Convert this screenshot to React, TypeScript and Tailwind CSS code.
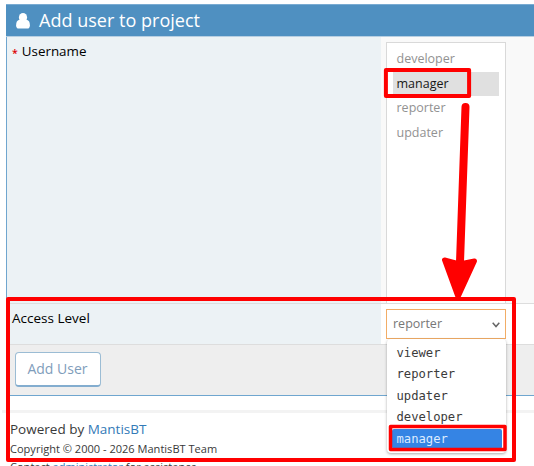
const roles = ['developer', 'manager', 'reporter', 'updater'];
const levels = ['viewer', 'reporter', 'updater', 'developer', 'manager'];

function UserIcon() {
  return (
    <svg className="ml-[10px] h-[16px] w-[14px]" viewBox="0 0 14 16" fill="#fff">
      <ellipse cx="7" cy="4.400" rx="4.100" ry="4.400" />
      <path d="M3.300 6.800C1.100 7.200.1 9.500.1 12.400c0 1.900 1 3.200 2.600 3.200h8.600c1.600 0 2.600-1.300 2.600-3.200 0-2.900-1-5.200-3.200-5.600z" />
    </svg>
  );
}

function UserForm() {
  return (
    <section className="ml-[6px] mt-[4px] h-[392px] border-b border-l border-[#6fa6cf]">
      <h4 className="-ml-px flex h-[33px] items-center border-b border-t border-b-[#b7cfe2] border-t-[#79abd2] bg-[#4f90c1] text-[18px] text-white">
        <UserIcon />
        <span className="ml-[9px] tracking-[0.02px]">Add user to project</span>
      </h4>
      <div className="flex h-[266px]">
        <div className="flex w-[374px] gap-[4px] bg-[#ecf2f5] pl-[5px] pt-[4px] text-[13.4px] leading-[20px] text-black">
          <span className="pt-[2px] text-[10.500px] font-semibold text-[#d00]">*</span>
          <span>Username</span>
        </div>
        <div className="flex-1 bg-[#f9f9f9] pl-[5px] pt-[5px]">
          <ul className="h-[261px] w-[120px] border border-b-0 border-[#d9d9d9] bg-white px-[6px] pt-[4px] text-[12.5px] text-[#929292]">
            {roles.map((role) => (
              <li key={role} className={role === 'manager' ? 'h-[24.600px] bg-[#e0e0e0] pl-[3.500px] leading-[23.500px] text-[#161616]' : 'h-[24.600px] pl-[3.500px] leading-[23.500px]'}>
                {role}
              </li>
            ))}
          </ul>
        </div>
      </div>
      <div className="flex h-[41px] border-t border-[#ddd]">
        <div className="w-[374px] bg-[#ecf2f5] pl-[5px] pt-[4px] text-[13.500px] leading-[20px] text-black">Access Level</div>
        <div className="flex-1 bg-white pl-[5px] pt-[5px]">
          <div className="flex h-[30px] w-[120px] items-center justify-between border border-[#f2ad66] pl-[6px] pr-[5px] text-[12.5px] text-[#777]">
            reporter
            <svg className="mt-px h-[6px] w-[8px]" viewBox="0 0 8 6" fill="none" stroke="#666" strokeWidth="1.500">
              <path d="M.7.800 4 4.500 7.300.800" />
            </svg>
          </div>
        </div>
      </div>
      <div className="h-[51px] border-t border-[#ddd] bg-[#eee] pl-[7px] pt-[7px]">
        <button className="ml-[0.500px] flex h-[35px] w-[86px] items-center justify-center rounded-[4px] border border-b-2 border-[#9bbcd4] border-b-[#83adcf] bg-white pb-px text-[14px] text-[#7f9dbb]">Add User</button>
      </div>
    </section>
  );
}

function LevelMenu() {
  return (
    <ul className="absolute left-[387px] top-[339px] h-[114px] w-[119px] rounded-[4px] bg-white pt-[4px] font-['DejaVu_Sans_Mono',monospace] text-[12.2px] leading-[21.4px] text-[#3b3b3b] shadow-[0_1px_3px_#0005]">
      {levels.map((level) => (
        <li key={level} className={level === 'manager' ? 'ml-[5px] mr-[4px] h-[20px] rounded-[2px] bg-[#3584e4] pl-[4.500px] text-[#dcebff]' : 'h-[21.400px] pl-[9.500px]'}>
          {level}
        </li>
      ))}
    </ul>
  );
}

function Annotations() {
  return (
    <svg className="absolute left-0 top-0 h-[466px] w-[534px]" viewBox="0 0 534 466" fill="none" stroke="#f00" strokeLinejoin="round">
      <rect x="385.900" y="69.900" width="83.200" height="26.200" strokeWidth="4" />
      <path d="M465.500 107 460 262" strokeWidth="8" strokeLinecap="round" />
      <path d="m444.500 260 15 4 15-3-16.500 36z" fill="#f00" strokeWidth="5" />
      <rect x="8" y="299" width="506" height="161" strokeWidth="4" />
      <rect x="390.500" y="426.500" width="114.500" height="23" strokeWidth="3.500" />
    </svg>
  );
}

export default function App() {
  return (
    <main className="relative h-[466px] w-[534px] overflow-hidden bg-white font-['Open_Sans',sans-serif]">
      <UserForm />
      <footer className="ml-[2px] mt-[14px] border-t-[3px] border-[#f3f3f3] pl-[8px] pt-[6px] text-[#393939]">
        <p className="text-[13.500px] leading-[20px]">Powered by <a className="text-[#337ab7]">MantisBT</a></p>
        <p className="text-[11.050px] leading-[19px]">Copyright © 2000 - 2026 MantisBT Team</p>
        <p className="text-[11.050px] leading-[18px]">Contact <a className="text-[#337ab7]">administrator</a> for assistance</p>
      </footer>
      <LevelMenu />
      <Annotations />
    </main>
  );
}
